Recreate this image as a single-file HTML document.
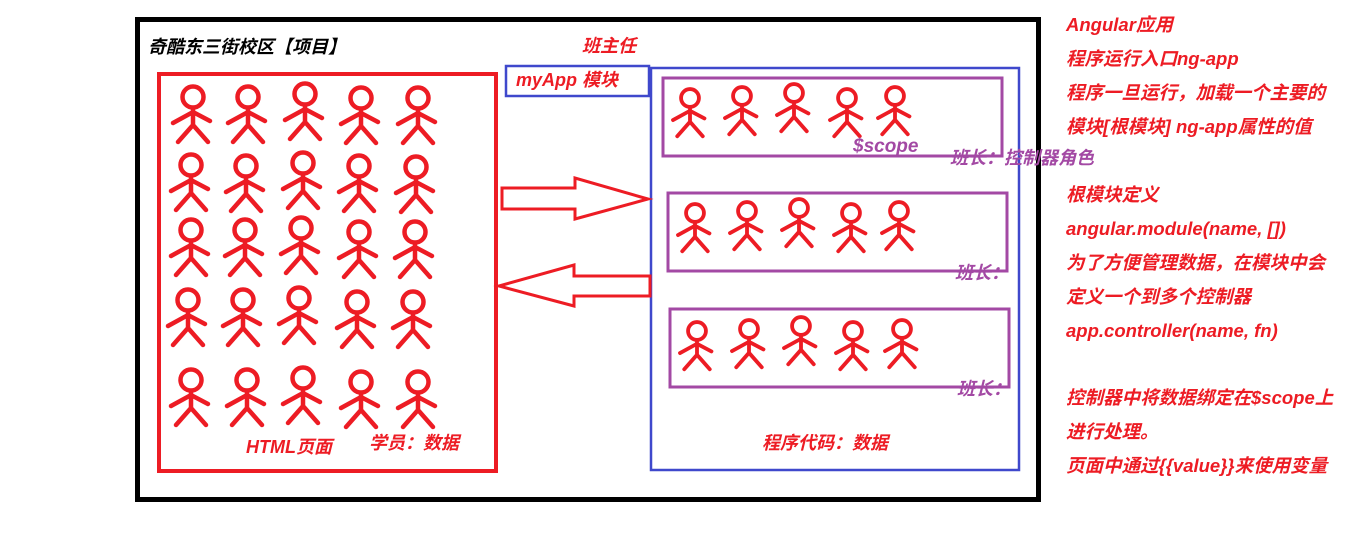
<!DOCTYPE html>
<html><head><meta charset="utf-8"><style>
body{margin:0;background:#fff;width:1358px;height:539px;overflow:hidden}
svg text{font-family:"Liberation Sans","Noto Sans CJK SC",sans-serif;font-weight:bold;font-style:italic}
</style></head><body>
<svg width="1358" height="539" xmlns="http://www.w3.org/2000/svg">
<defs>
<g id="f" fill="none" stroke="#ed1c24" stroke-width="4.5" stroke-linecap="round">
<circle cx="0" cy="0" r="10.5"/>
<path d="M0 11V28M-20 26L0 15L17 24M0 28L-15 45M0 28L15 45"/>
</g>
</defs>
<rect x="137.5" y="19.5" width="901" height="480" fill="none" stroke="#000" stroke-width="5"/>
<rect x="159" y="74" width="337" height="397" fill="none" stroke="#ed1c24" stroke-width="4"/>
<rect x="506" y="66" width="143" height="30" fill="none" stroke="#3f48cc" stroke-width="2.5"/>
<rect x="651" y="68" width="368" height="402" fill="none" stroke="#3f48cc" stroke-width="2.5"/>
<rect x="663" y="78" width="339" height="78" fill="none" stroke="#a349a4" stroke-width="3"/>
<rect x="668" y="193" width="339" height="78" fill="none" stroke="#a349a4" stroke-width="3"/>
<rect x="670" y="309" width="339" height="78" fill="none" stroke="#a349a4" stroke-width="3"/>
<path d="M502 188H575V178L648 199L575 219V209H502Z" fill="none" stroke="#ed1c24" stroke-width="3"/>
<path d="M650 276H574V265L499 286L574 306V296H650Z" fill="none" stroke="#ed1c24" stroke-width="3"/>
<g>
<use href="#f" x="193" y="97"/><use href="#f" x="248" y="97"/><use href="#f" x="305" y="94"/><use href="#f" x="361" y="98"/><use href="#f" x="418" y="98"/>
<use href="#f" x="191" y="165"/><use href="#f" x="246" y="166"/><use href="#f" x="303" y="163"/><use href="#f" x="359" y="166"/><use href="#f" x="416" y="167"/>
<use href="#f" x="191" y="230"/><use href="#f" x="245" y="230"/><use href="#f" x="301" y="228"/><use href="#f" x="359" y="232"/><use href="#f" x="415" y="232"/>
<use href="#f" x="188" y="300"/><use href="#f" x="243" y="300"/><use href="#f" x="299" y="298"/><use href="#f" x="357" y="302"/><use href="#f" x="413" y="302"/>
<use href="#f" x="191" y="380"/><use href="#f" x="247" y="380"/><use href="#f" x="303" y="378"/><use href="#f" x="361" y="382"/><use href="#f" x="418" y="382"/>
</g>
<g>
<g transform="translate(690,98) scale(0.85)"><use href="#f"/></g><g transform="translate(742,96) scale(0.85)"><use href="#f"/></g><g transform="translate(794,93) scale(0.85)"><use href="#f"/></g><g transform="translate(847,98) scale(0.85)"><use href="#f"/></g><g transform="translate(895,96) scale(0.85)"><use href="#f"/></g>
<g transform="translate(695,213) scale(0.85)"><use href="#f"/></g><g transform="translate(747,211) scale(0.85)"><use href="#f"/></g><g transform="translate(799,208) scale(0.85)"><use href="#f"/></g><g transform="translate(851,213) scale(0.85)"><use href="#f"/></g><g transform="translate(899,211) scale(0.85)"><use href="#f"/></g>
<g transform="translate(697,331) scale(0.85)"><use href="#f"/></g><g transform="translate(749,329) scale(0.85)"><use href="#f"/></g><g transform="translate(801,326) scale(0.85)"><use href="#f"/></g><g transform="translate(853,331) scale(0.85)"><use href="#f"/></g><g transform="translate(902,329) scale(0.85)"><use href="#f"/></g>
</g>
<text x="148" y="53" font-size="18" fill="#000">奇酷东三街校区【项目】</text>
<text x="582" y="52" font-size="18" fill="#ed1c24">班主任</text>
<text x="516" y="86" font-size="18" fill="#ed1c24">myApp 模块</text>
<text x="853" y="152" font-size="19" fill="#a349a4">$scope</text>
<text x="950" y="164" font-size="18" fill="#a349a4">班长：控制器角色</text>
<text x="955" y="279" font-size="18" fill="#a349a4">班长：</text>
<text x="957" y="395" font-size="18" fill="#a349a4">班长：</text>
<text x="246" y="453" font-size="18" fill="#ed1c24">HTML页面</text>
<text x="369" y="449" font-size="18" fill="#ed1c24">学员：数据</text>
<text x="762" y="449" font-size="18" fill="#ed1c24">程序代码：数据</text>
<g font-size="18.5" fill="#ed1c24">
<text x="1066" y="31">Angular应用</text>
<text x="1066" y="65">程序运行入口ng-app</text>
<text x="1066" y="99">程序一旦运行，加载一个主要的</text>
<text x="1066" y="133">模块[根模块] ng-app属性的值</text>
<text x="1066" y="201">根模块定义</text>
<text x="1066" y="235">angular.module(name, [])</text>
<text x="1066" y="269">为了方便管理数据，在模块中会</text>
<text x="1066" y="303">定义一个到多个控制器</text>
<text x="1066" y="337">app.controller(name, fn)</text>
<text x="1066" y="404">控制器中将数据绑定在$scope上</text>
<text x="1066" y="438">进行处理。</text>
<text x="1066" y="472">页面中通过{{value}}来使用变量</text>
</g>
</svg>
</body></html>
